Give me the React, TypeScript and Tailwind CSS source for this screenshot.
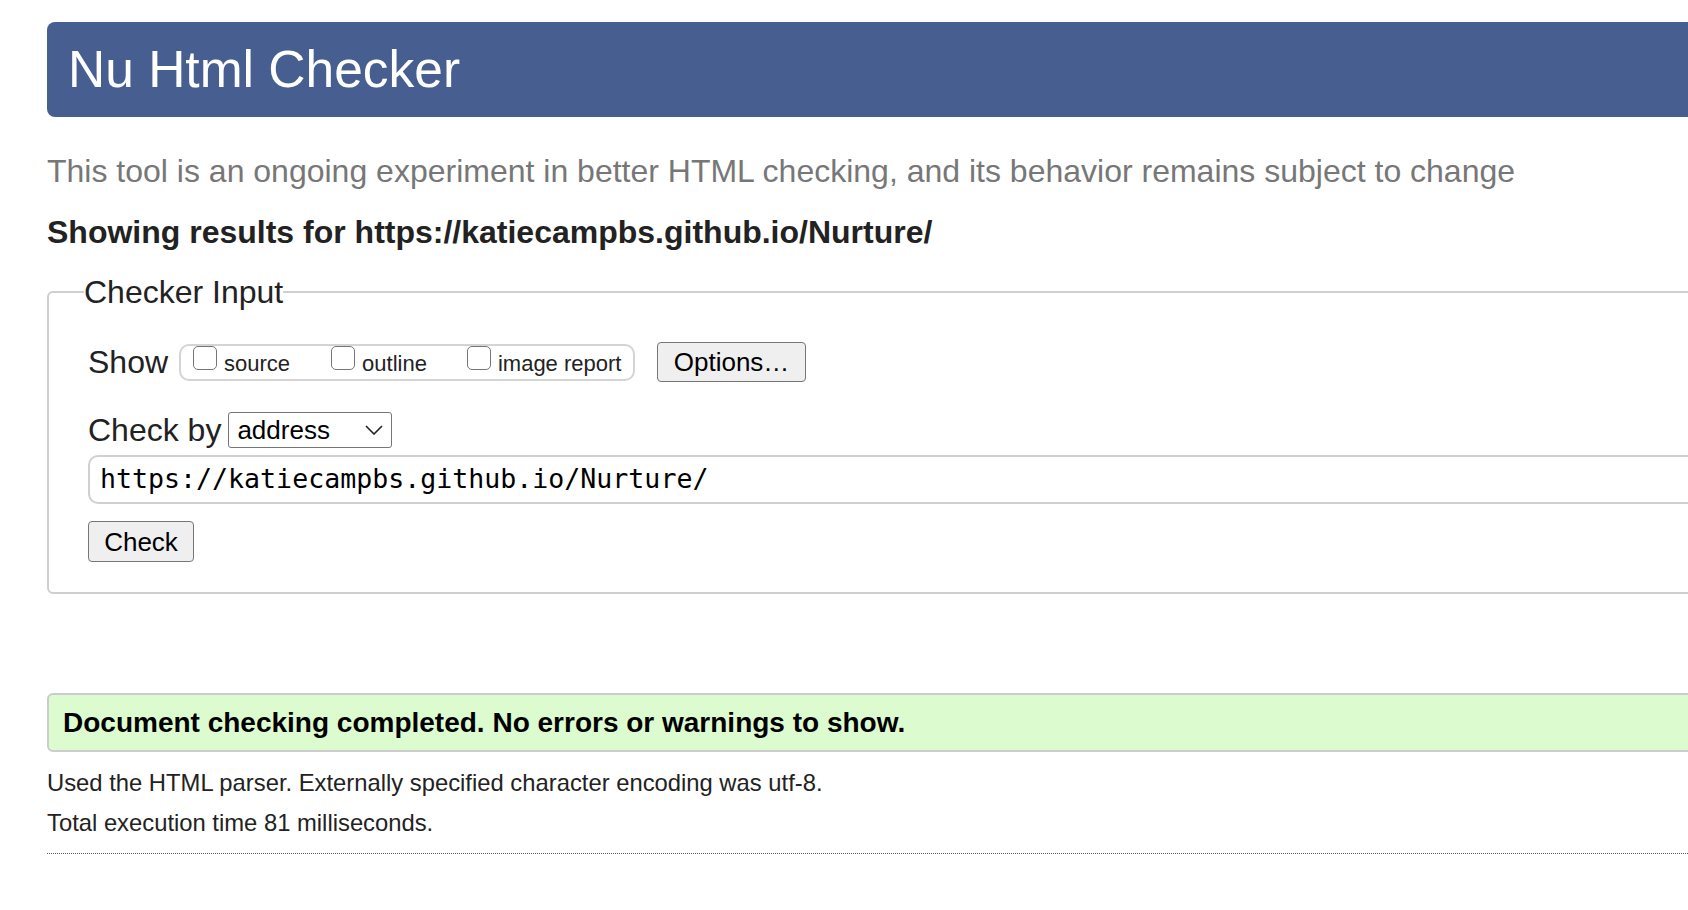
import React from "react";

function Checkbox() {
  return (
    <span className="inline-block w-[24px] h-[24px] rounded-[5px] border-[1.5px] border-[#767676] bg-white shrink-0" />
  );
}

export default function App() {
  return (
    <div className="w-full min-h-[910px] overflow-hidden bg-white text-[#222]" style={{ fontFamily: '"Liberation Sans", Arial, sans-serif' }}>
      <div className="w-[1800px] pl-[47px] pt-[22px]">
        <div className="h-[95px] bg-[#465e90] rounded-l-[8px] flex items-center pl-[21px]">
          <h1 className="text-white text-[51.5px] leading-none">Nu Html Checker</h1>
        </div>

        <p className="mt-[35px] text-[32px] leading-[38px] text-[#777]">
          This tool is an ongoing experiment in better HTML checking, and its behavior remains subject to change
        </p>

        <p className="mt-[23px] text-[32px] leading-[38px] font-bold text-[#222]">
          Showing results for https://katiecampbs.github.io/Nurture/
        </p>

        <fieldset className="mt-[22px] border-2 border-[#cfcfcf] rounded-[6px] pl-[39px] pt-[31px] pb-[30px]">
          <legend className="-ml-[4px] px-0 text-[32px] leading-[38px] text-[#222]">Checker Input</legend>

          <div className="flex items-center h-[40px]">
            <span className="text-[32px] leading-[38px]">Show</span>
            <div className="ml-[11px] h-[37px] w-[456px] border-2 border-[#d4d4d4] rounded-[10px] flex items-start pl-[12px] pt-0">
              <div className="flex items-start">
                <Checkbox />
                <span className="ml-[7px] mt-[6px] text-[22px] leading-[24px]">source</span>
              </div>
              <div className="flex items-start ml-[41px]">
                <Checkbox />
                <span className="ml-[7px] mt-[6px] text-[22px] leading-[24px]">outline</span>
              </div>
              <div className="flex items-start ml-[40px]">
                <Checkbox />
                <span className="ml-[7px] mt-[6px] text-[22px] leading-[24px]">image report</span>
              </div>
            </div>
            <button className="ml-[22px] h-[40px] w-[149px] bg-[#efefef] border-[1.5px] border-[#767676] rounded-[4px] text-[26px] leading-none text-black flex items-center justify-center">
              Options…
            </button>
          </div>

          <div className="mt-[30px] flex items-center h-[36px]">
            <span className="text-[32px] leading-[38px]">Check by</span>
            <div className="ml-[7px] h-[36px] w-[164px] border-[1.5px] border-[#767676] rounded-[3px] bg-white flex items-center justify-between pl-[8px] pr-[8px]">
              <span className="text-[26px] leading-none text-black">address</span>
              <svg width="18" height="10" viewBox="0 0 18 10" fill="none" stroke="#222" strokeWidth="1.6">
                <path d="M1 1 L9 9 L17 1" />
              </svg>
            </div>
          </div>

          <div className="mt-[7px] h-[49px] border-2 border-[#d0d0d0] rounded-[10px] flex items-center pl-[10px]">
            <span className="text-[26.6px] leading-none text-black" style={{ fontFamily: '"DejaVu Sans Mono", monospace' }}>
              https://katiecampbs.github.io/Nurture/
            </span>
          </div>

          <button className="mt-[17px] h-[41px] w-[106px] bg-[#efefef] border-[1.5px] border-[#767676] rounded-[4px] text-[26px] leading-none text-black flex items-center justify-center">
            Check
          </button>
        </fieldset>

        <div className="mt-[99px] h-[59px] bg-[#dcfcd0] border-2 border-[#cccccc] rounded-l-[6px] flex items-center pl-[14px]">
          <span className="text-[28px] leading-none font-bold text-black">
            Document checking completed. No errors or warnings to show.
          </span>
        </div>

        <p className="mt-[17px] text-[23.8px] leading-[28px] text-[#222]">
          Used the HTML parser. Externally specified character encoding was utf-8.
        </p>
        <p className="mt-[12px] text-[23.8px] leading-[28px] text-[#222]">Total execution time 81 milliseconds.</p>

        <div className="mt-[16px] border-t-[1.5px] border-dotted border-[#555]" />
      </div>
    </div>
  );
}
